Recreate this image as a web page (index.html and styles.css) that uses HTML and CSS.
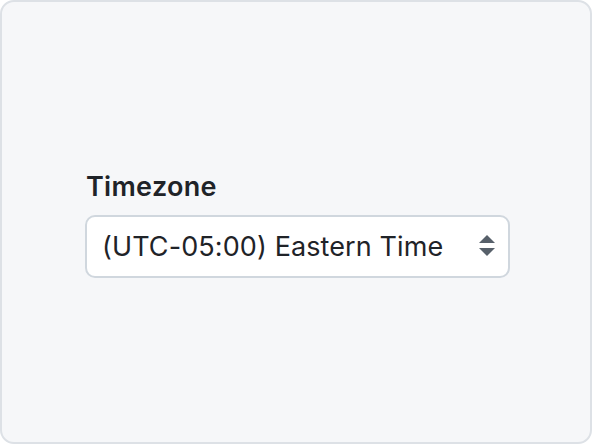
FILE: index.html
```html
<!DOCTYPE html>
<html lang="en">
<head>
	<meta charset="UTF-8">
	<title>Timezone</title>
	<link rel="stylesheet" href="styles.css">
</head>
<body>
	<div class="frame">
		<div class="field">
			<label class="field-label" for="tz">Timezone</label>
			<div class="select-wrap">
				<select id="tz" class="select">
					<option>(UTC-05:00) Eastern Time</option>
					<option>(UTC-06:00) Central Time</option>
					<option>(UTC-07:00) Mountain Time</option>
					<option>(UTC-08:00) Pacific Time</option>
				</select>
				<svg class="select-icon" width="18" height="26" viewBox="0 0 18 26" aria-hidden="true">
					<path d="M9 2 L17 10 H1 Z" fill="#57606a"/>
					<path d="M1 15 H17 L9 23 Z" fill="#57606a"/>
				</svg>
			</div>
		</div>
	</div>
</body>
</html>
```

FILE: styles.css
```css
html, body { margin: 0; padding: 0; }
body { font-family: Inter, "Noto Sans", sans-serif; color: #1f2328; }
.frame {
	box-sizing: border-box;
	width: 592px;
	height: 444px;
	display: flex;
	align-items: center;
	justify-content: center;
	background: #f6f7f9;
	border: 2px solid #dde1e6;
	border-radius: 14px;
}
.field { display: flex; flex-direction: column; width: 425px; margin: 6px 0 0 3px; }
.field-label { font-size: 27px; font-weight: 600; letter-spacing: 0.3px; margin: 0 0 13px 1px; line-height: 30px; }
.select-wrap { position: relative; }
.select {
	box-sizing: border-box;
	width: 100%;
	height: 63px;
	padding: 0 50px 0 15px;
	font-family: inherit;
	font-size: 27px;
	letter-spacing: 0.1px;
	color: #1f2328;
	background: #fff;
	border: 2px solid #d0d7de;
	border-radius: 10px;
	appearance: none;
	-webkit-appearance: none;
	outline: none;
}
.select-icon { position: absolute; right: 14px; top: 18px; pointer-events: none; }
```
